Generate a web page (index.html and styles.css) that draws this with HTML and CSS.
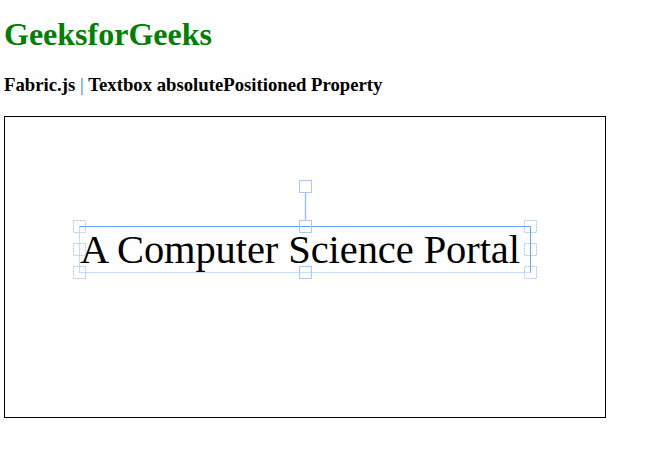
FILE: index.html
```html
<!DOCTYPE html>
<html>
<head>
<meta charset="utf-8">
<link rel="stylesheet" href="styles.css">
</head>
<body>
  <h1 class="title">GeeksforGeeks</h1>
  <h3 class="subtitle">Fabric.js <span class="pipe">|</span> Textbox absolutePositioned Property</h3>
  <div class="canvas">
    <svg class="stage" width="600" height="300" viewBox="0 0 600 300" xmlns="http://www.w3.org/2000/svg">
      <text class="label" x="75" y="146" textLength="440" lengthAdjust="spacing">A Computer Science Portal</text>
      <line class="edge" x1="74.5" y1="109.5" x2="525.5" y2="109.5"/>
      <line class="edge" x1="525.5" y1="109.5" x2="525.5" y2="155.5"/>
      <line class="edge-dot" x1="74.5" y1="109.5" x2="74.5" y2="155.5"/>
      <line class="edge-dot" x1="74.5" y1="155.5" x2="525.5" y2="155.5"/>
      <line class="stem" x1="300.5" y1="75.5" x2="300.5" y2="103"/>
      <rect class="ctl dot" x="68.5" y="103.5" width="12" height="12"/>
      <rect class="ctl dot" x="68.5" y="126.5" width="12" height="12"/>
      <rect class="ctl dot" x="68.5" y="149.5" width="12" height="12"/>
      <rect class="ctl" x="294.5" y="103.5" width="12" height="12"/>
      <rect class="ctl" x="294.5" y="149.5" width="12" height="12"/>
      <rect class="ctl" x="294.5" y="63.5" width="12" height="12"/>
      <rect class="ctl dot" x="519.5" y="103.5" width="12" height="12"/>
      <rect class="ctl dot" x="519.5" y="126.5" width="12" height="12"/>
      <rect class="ctl dot" x="519.5" y="149.5" width="12" height="12"/>
    </svg>
  </div>
</body>
</html>
```
FILE: styles.css
```css
body {
  margin: 0 0 0 4px;
  font-family: "Liberation Serif", "Times New Roman", serif;
  background: #fff;
}
.title {
  color: green;
  font-size: 32px;
  font-weight: bold;
  margin: 15.5px 0 21.44px;
}
.subtitle {
  font-size: 18.72px;
  font-weight: bold;
  margin: 0 0 20px;
  color: #000;
}
.pipe {
  color: #6a9fd4;
}
.canvas {
  width: 600px;
  height: 300px;
  border: 1px solid #000;
}
.stage {
  display: block;
}
.label {
  font-family: "Liberation Serif", "Times New Roman", serif;
  font-size: 40.5px;
  fill: #000;
}
.edge {
  stroke: #64a4f0;
  stroke-width: 1;
}
.edge-dot {
  stroke: #8fb8f0;
  stroke-width: 1;
  stroke-dasharray: 1 1;
}
.stem {
  stroke: #9dc0f2;
  stroke-width: 1.5;
}
.ctl {
  fill: none;
  stroke: #a9c8f5;
  stroke-width: 1;
}
.ctl.dot {
  stroke-dasharray: 2 1;
}
```
